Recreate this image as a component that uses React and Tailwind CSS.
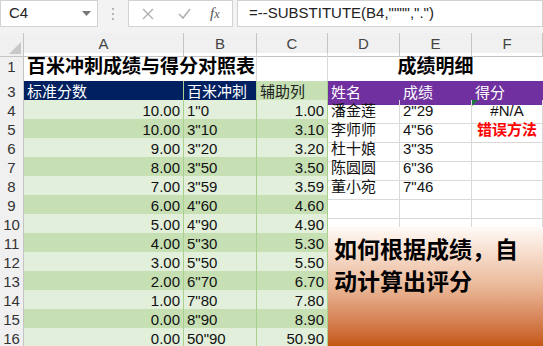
const rows = [
  ["10.00", '1"0', "1.00", "潘金莲", '2"29', "na"],
  ["10.00", '3"10', "3.10", "李师师", '4"56', "err"],
  ["9.00", '3"20', "3.20", "杜十娘", '3"35', ""],
  ["8.00", '3"50', "3.50", "陈圆圆", '6"36', ""],
  ["7.00", '3"59', "3.59", "董小宛", '7"46', ""],
  ["6.00", '4"60', "4.60", "", "", ""],
  ["5.00", '4"90', "4.90", "", "", ""],
  ["4.00", '5"30', "5.30", "", "", ""],
  ["3.00", '5"50', "5.50", "", "", ""],
  ["2.00", '6"70', "6.70", "", "", ""],
  ["1.00", '7"80', "7.80", "", "", ""],
  ["0.00", '8"90', "8.90", "", "", ""],
  ["0.00", '50"90', "50.90", "", "", ""],
];

const gridCols =
  "grid grid-cols-[24px_160px_73px_71px_72px_72px_71px]";
const rowHead =
  "flex items-center justify-center border-r border-b border-[#c4c4c4] bg-[#f0f0f0] text-[15px] text-[#333]";
const greenCell = "border-r border-b border-[#a9d08e] px-[3px] flex items-center";
const plainCell = "border-r border-b border-[#d9d9d9] px-[3px] flex items-center";

const App = () => {
  return (
    <div
      className="relative h-[346px] w-[543px] overflow-hidden bg-white text-[#111]"
      style={{ fontFamily: '"Liberation Sans", "Noto Sans CJK SC", sans-serif' }}
    >
      {/* formula bar */}
      <div className="flex h-[33px] items-start bg-[#f3f3f3]">
        <div className="flex h-[27px] w-[98px] items-center justify-between border border-[#d2d2d2] bg-white pl-[8px] pr-[6px] text-[15px] text-[#222]">
          <span>C4</span>
          <svg width="9" height="5" viewBox="0 0 9 5">
            <path d="M0 0 L9 0 L4.5 5 Z" fill="#777" />
          </svg>
        </div>
        <div className="flex h-[27px] w-[30px] flex-col items-center justify-center gap-[3px]">
          <span className="h-[2px] w-[2px] bg-[#b5b5b5]" />
          <span className="h-[2px] w-[2px] bg-[#b5b5b5]" />
          <span className="h-[2px] w-[2px] bg-[#b5b5b5]" />
        </div>
        <div className="flex h-[27px] w-[105px] items-center border border-[#d2d2d2] bg-white">
          <svg className="ml-[13px]" width="12" height="12" viewBox="0 0 12 12">
            <path d="M1 1 L11 11 M11 1 L1 11" stroke="#b0b0b0" strokeWidth="1.4" />
          </svg>
          <svg className="ml-[24px]" width="13" height="11" viewBox="0 0 13 11">
            <path d="M1 6 L5 10 L12 1" stroke="#b0b0b0" strokeWidth="1.6" fill="none" />
          </svg>
          <span
            className="ml-[19px] text-[15px] italic text-[#555]"
            style={{ fontFamily: '"Liberation Serif", serif' }}
          >
            f<span className="text-[12px]">x</span>
          </span>
        </div>
        <div className="ml-[4px] flex h-[27px] flex-1 items-center border border-[#d2d2d2] bg-white pl-[11px] text-[15px] text-[#222]">
          =--SUBSTITUTE(B4,"""",".")
        </div>
      </div>

      {/* column headers */}
      <div className={`${gridCols} h-[20px] bg-[#f0f0f0] text-[15px] text-[#444]`}>
        <div className="relative border-r border-b border-[#c4c4c4]">
          <svg className="absolute bottom-[2px] right-[2px]" width="12" height="12" viewBox="0 0 12 12">
            <path d="M12 0 L12 12 L0 12 Z" fill="#c8c8c8" />
          </svg>
        </div>
        {["A", "B", "C", "D", "E", "F"].map((c) => (
          <div
            key={c}
            className="flex items-center justify-center border-r border-b border-[#c4c4c4]"
          >
            {c}
          </div>
        ))}
      </div>

      {/* row 1 */}
      <div className={`${gridCols} h-[28px]`}>
        <div className={rowHead}>1</div>
        <div className="col-span-2 flex items-center border-r border-b border-[#d9d9d9] pl-[3px] text-[19px] font-bold text-black">
          百米冲刺成绩与得分对照表
        </div>
        <div className={plainCell} />
        <div className="col-span-3 flex items-center justify-center border-b border-[#d9d9d9] text-[19px] font-bold text-black">
          成绩明细
        </div>
      </div>

      {/* row 3 */}
      <div className={`${gridCols} h-[19px] text-[15px]`}>
        <div className={rowHead}>3</div>
        <div className="flex items-center border-r border-b border-[#a9d08e] bg-[#002060] px-[3px] text-white">
          标准分数
        </div>
        <div className="flex items-center border-r border-b border-[#a9d08e] bg-[#002060] px-[3px] text-white">
          百米冲刺
        </div>
        <div className="flex items-center border-r border-b border-[#a9d08e] bg-[#c6e0b4] px-[3px] text-[#222]">
          辅助列
        </div>
        <div className="col-span-3 grid grid-cols-[72px_72px_71px] bg-[#7030a0] text-white">
          <div className="flex items-center px-[3px]">姓名</div>
          <div className="flex items-center px-[3px]">成绩</div>
          <div className="flex items-center px-[3px]">得分</div>
        </div>
      </div>

      {/* data rows */}
      {rows.map((r, i) => {
        const bg = i % 2 === 0 ? "bg-[#e2efda]" : "bg-[#c6e0b4]";
        return (
          <div key={i} className={`${gridCols} h-[19px] text-[15px]`}>
            <div className={rowHead}>{i + 4}</div>
            <div className={`${greenCell} ${bg} justify-end`}>{r[0]}</div>
            <div className={`${greenCell} ${bg}`}>{r[1]}</div>
            <div className={`${greenCell} ${bg} relative justify-end`}>
              {r[2]}
              {i === 12 ? (
                <span className="absolute bottom-[-1px] right-[-2px] h-[4px] w-[4px] bg-[#3a5ba0]" />
              ) : null}
            </div>
            <div className={plainCell}>{r[3]}</div>
            <div className={plainCell}>{r[4]}</div>
            <div className={`${plainCell} relative justify-center`}>
              {r[5] === "na" ? (
                <>
                  <svg className="absolute left-0 top-0" width="6" height="6" viewBox="0 0 6 6">
                    <path d="M0 0 L6 0 L0 6 Z" fill="#1d7a3a" />
                  </svg>
                  #N/A
                </>
              ) : null}
              {r[5] === "err" ? (
                <span className="font-bold text-[#ff0000]">错误方法</span>
              ) : null}
            </div>
          </div>
        );
      })}

      {/* text box overlay */}
      <div className="absolute left-[328px] top-[227px] h-[119px] w-[215px] bg-gradient-to-b from-[#fffaf6] via-[#eab898] to-[#c4570f] pl-[6px] pt-[7px] text-[23px] font-bold leading-[32px] text-black">
        如何根据成绩，自
        <br />
        动计算出评分
      </div>
    </div>
  );
};

export default App;
